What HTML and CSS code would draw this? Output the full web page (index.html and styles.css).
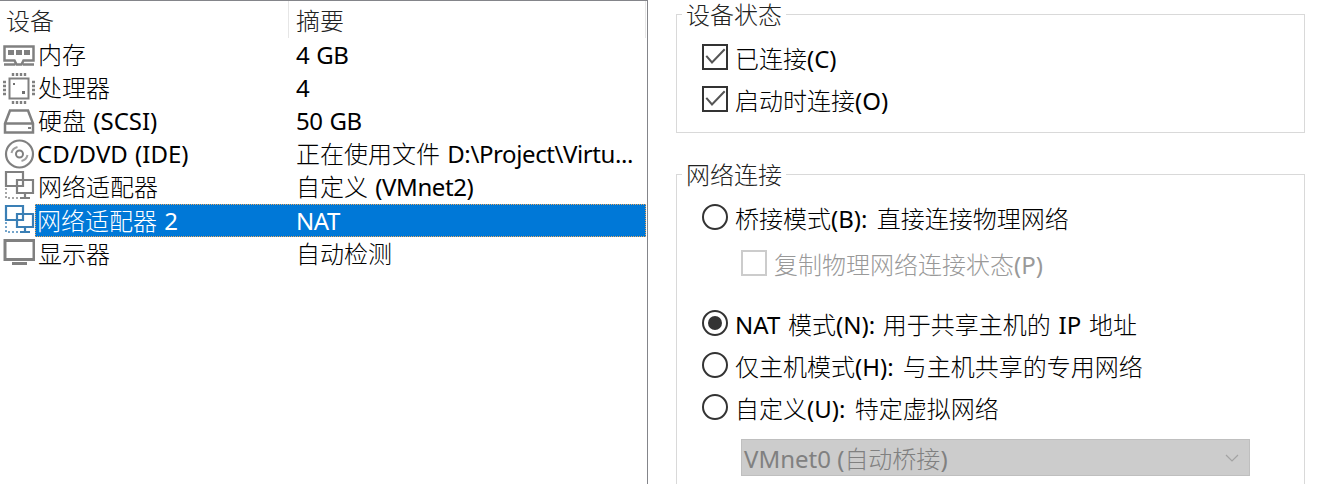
FILE: index.html
```html
<!DOCTYPE html>
<html lang="zh-CN">
<head>
    <meta charset="UTF-8">
    <title>虚拟机设置</title>
    <link rel="stylesheet" href="styles.css">
</head>
<body>
    <svg class="defs" width="0" height="0">
        <symbol id="net" viewBox="0 0 32 32">
            <path d="M3 1h17v14H3zM14 9h16v13H14zM22 22v4M17 27h10" fill="#fff" stroke="currentColor" stroke-width="2.200"/>
            <path d="M3 17v10h12" fill="none" stroke="currentColor" stroke-opacity=".7" stroke-width="2" stroke-dasharray="2 2"/>
        </symbol>
    </svg>

    <div class="device-panel">
        <div class="device-head">
            <span class="head-name">设备</span>
            <span class="head-summary">摘要</span>
        </div>
        <div class="device-row">
            <svg class="device-icon" viewBox="0 0 32 32">
                <path d="M1.500 7.500h29v14h-10l-2 4h-5l-2-4h-10z M1 25.500h11M20 25.500h11" fill="none" stroke="#808080" stroke-width="2.500"/>
                <path d="M5 11h6v5H5zM13 11h6v5h-6zM21 11h6v5h-6z" fill="#808080"/>
            </svg>
            <div class="device-cells"><span class="cell-name">内存</span><span class="lat">4 GB</span></div>
        </div>
        <div class="device-row">
            <svg class="device-icon" viewBox="0 0 32 32">
                <path d="M6.500 6.500h19v20h-19z" fill="none" stroke="#808080" stroke-width="2"/>
                <path d="M10 1v3M14 1v3M18 1v3M22 1v3M10 29v3M14 29v3M18 29v3M22 29v3M0 10h3M0 14h3M0 18h3M0 22h3M29 10h3M29 14h3M29 18h3M29 22h3" stroke="#808080" stroke-width="2.400"/>
                <path d="M10 11h2v2h-2zM19 19h3v3h-3z" fill="#707070"/>
            </svg>
            <div class="device-cells"><span class="cell-name">处理器</span><span class="lat">4</span></div>
        </div>
        <div class="device-row">
            <svg class="device-icon" viewBox="0 0 32 32">
                <path d="M7 5.500h18l5 13v9H2v-9zM2 18.500h28" fill="none" stroke="#808080" stroke-width="2.500"/>
                <path d="M25 22h3v2h-3z" fill="#808080"/>
            </svg>
            <div class="device-cells"><span class="cell-name">硬盘 <span class="lat">(SCSI)</span></span><span class="lat">50 GB</span></div>
        </div>
        <div class="device-row">
            <svg class="device-icon" viewBox="0 0 32 32">
                <circle cx="16.500" cy="16" r="13.500" fill="none" stroke="#808080" stroke-width="2.200"/>
                <circle cx="16.500" cy="16" r="3.500" fill="none" stroke="#808080" stroke-width="2"/>
                <path d="M8.500 15a8 8 0 0 1 6-6M24.500 17a8 8 0 0 1-6 6" fill="none" stroke="#a0a0a0" stroke-width="2"/>
            </svg>
            <div class="device-cells"><span class="cell-name cell-tight lat">CD/DVD (IDE)</span><span>正在使用文件 <span class="lat">D:\Project\Virtu...</span></span></div>
        </div>
        <div class="device-row">
            <svg class="device-icon net-gray"><use href="#net"/></svg>
            <div class="device-cells"><span class="cell-name">网络适配器</span><span>自定义 <span class="lat">(VMnet2)</span></span></div>
        </div>
        <div class="device-row selected">
            <svg class="device-icon net-blue"><use href="#net"/></svg>
            <div class="device-cells"><span class="cell-name cell-tight">网络适配器 <span class="lat">2</span></span><span class="lat">NAT</span></div>
        </div>
        <div class="device-row">
            <svg class="device-icon" viewBox="0 0 32 32">
                <path d="M2 2.500h29v19H2z" fill="none" stroke="#808080" stroke-width="3"/>
                <path d="M9 25.500h15" stroke="#808080" stroke-width="3"/>
            </svg>
            <div class="device-cells"><span class="cell-name">显示器</span><span>自动检测</span></div>
        </div>
    </div>

    <div class="settings">
        <fieldset class="group status-group">
            <legend>设备状态</legend>
            <div class="group-body">
                <label class="option"><span class="check"><svg viewBox="0 0 22 22"><path d="M2.300 9.800L8 16.500 20.700 3.200" fill="none" stroke="#555" stroke-width="2"/></svg></span><span>已连接<span class="lat">(C)</span></span></label>
                <label class="option"><span class="check"><svg viewBox="0 0 22 22"><path d="M2.300 9.800L8 16.500 20.700 3.200" fill="none" stroke="#555" stroke-width="2"/></svg></span><span>启动时连接<span class="lat">(O)</span></span></label>
            </div>
        </fieldset>

        <fieldset class="group network-group">
            <legend>网络连接</legend>
            <div class="group-body">
                <label class="option"><span class="radio"></span><span>桥接模式<span class="lat">(B):</span> 直接连接物理网络</span></label>
                <label class="option sub-option disabled"><span class="check"></span><span>复制物理网络连接状态<span class="lat">(P)</span></span></label>
                <label class="option nat-option"><span class="radio on"></span><span><span class="lat">NAT</span> 模式<span class="lat">(N):</span> 用于共享主机的 <span class="lat">IP</span> 地址</span></label>
                <label class="option"><span class="radio"></span><span>仅主机模式<span class="lat">(H):</span> 与主机共享的专用网络</span></label>
                <label class="option"><span class="radio"></span><span>自定义<span class="lat">(U):</span> 特定虚拟网络</span></label>
                <div class="combo">
                    <span><span class="lat">VMnet0 (</span>自动桥接<span class="lat">)</span></span>
                    <svg class="combo-arrow" viewBox="0 0 14 8"><path d="M1 1l6 6 6-6" fill="none" stroke="#a3a3a3" stroke-width="1.200"/></svg>
                </div>
            </div>
        </fieldset>
    </div>
</body>
</html>
```

FILE: styles.css
```css
body {
    margin: 0;
    display: flex;
    overflow: hidden;
    height: 484px;
    background-color: #fff;
    color: #000;
    font-family: "Noto Sans", "Noto Sans CJK SC", sans-serif;
    font-size: 24px;
    font-weight: 300;
    word-spacing: 1px;
}
.lat {
    font-weight: 400;
}
.defs {
    position: absolute;
}
.device-panel {
    width: 647px;
    height: 483px;
    border-top: 1px solid #84858a;
    border-right: 1px solid #84858a;
    flex-shrink: 0;
}
.device-head {
    display: flex;
    height: 37px;
    color: #222;
}
.head-name {
    width: 282px;
    padding-left: 6px;
    line-height: 40px;
    border-right: 1px solid #e6e6e6;
}
.head-summary {
    padding-left: 7px;
    line-height: 40px;
    flex-grow: 1;
    border-right: 1px solid #e6e6e6;
    margin-right: 1px;
}
.device-row {
    display: flex;
    height: 33.2px;
    align-items: center;
}
.device-icon {
    width: 32px;
    height: 32px;
    margin-left: 3px;
    flex-shrink: 0;
}
.net-gray {
    color: #808080;
}
.net-blue {
    color: #3a7fb5;
}
.device-cells {
    display: flex;
    flex-grow: 1;
    height: 100%;
    align-items: center;
    margin-right: 1px;
    line-height: 32px;
}
.cell-name {
    width: 258px;
    padding-left: 3px;
}
.cell-tight {
    padding-left: 2px;
    width: 259px;
}
.cell-name ~ .lat,
.cell-name ~ span .lat {
    letter-spacing: -0.4px;
}
.selected .device-cells {
    background-color: #0078d7;
    color: #fff;
    outline: 1px dotted #e8a860;
    outline-offset: -1px;
}
.settings {
    flex-grow: 1;
    padding: 2px 15px 0 28px;
}
.group {
    margin: 0;
    padding: 0;
    border: 1px solid #d9d9d9;
    min-width: 0;
}
.group legend {
    margin-left: 5px;
    padding: 2px 4px 0;
    line-height: 22px;
    color: #222;
}
.group-body {
    padding-left: 25px;
    word-spacing: 3px;
}
.status-group {
    height: 131px;
    box-sizing: border-box;
}
.status-group .group-body {
    padding-top: 10px;
}
.network-group {
    margin-top: 29px;
    height: 340px;
    box-sizing: border-box;
}
.network-group .group-body {
    padding-top: 10px;
}
.option {
    display: flex;
    align-items: center;
    height: 42px;
    gap: 7px;
}
.check {
    width: 26px;
    height: 26px;
    box-sizing: border-box;
    border: 2px solid #333;
    flex-shrink: 0;
}
.check svg {
    display: block;
    width: 22px;
    height: 22px;
}
.radio {
    width: 26px;
    height: 26px;
    box-sizing: border-box;
    border: 2px solid #333;
    border-radius: 50%;
    flex-shrink: 0;
    display: flex;
    align-items: center;
    justify-content: center;
}
.radio.on::after {
    content: "";
    width: 14px;
    height: 14px;
    border-radius: 50%;
    background-color: #333;
}
.sub-option {
    margin-left: 39px;
    height: 50px;
}
.disabled {
    color: #999;
}
.disabled .check {
    border-color: #ccc;
}
.nat-option {
    margin-top: 14px;
    word-spacing: 1.500px;
}
.combo {
    display: flex;
    align-items: center;
    justify-content: space-between;
    width: 509px;
    height: 37px;
    box-sizing: border-box;
    margin: 11px 0 0 39px;
    padding: 0 10px 0 2px;
    background-color: #ccc;
    border: 1px solid #bfbfbf;
    color: #808080;
    word-spacing: 0;
}
.combo-arrow {
    width: 14px;
    height: 8px;
}
```
